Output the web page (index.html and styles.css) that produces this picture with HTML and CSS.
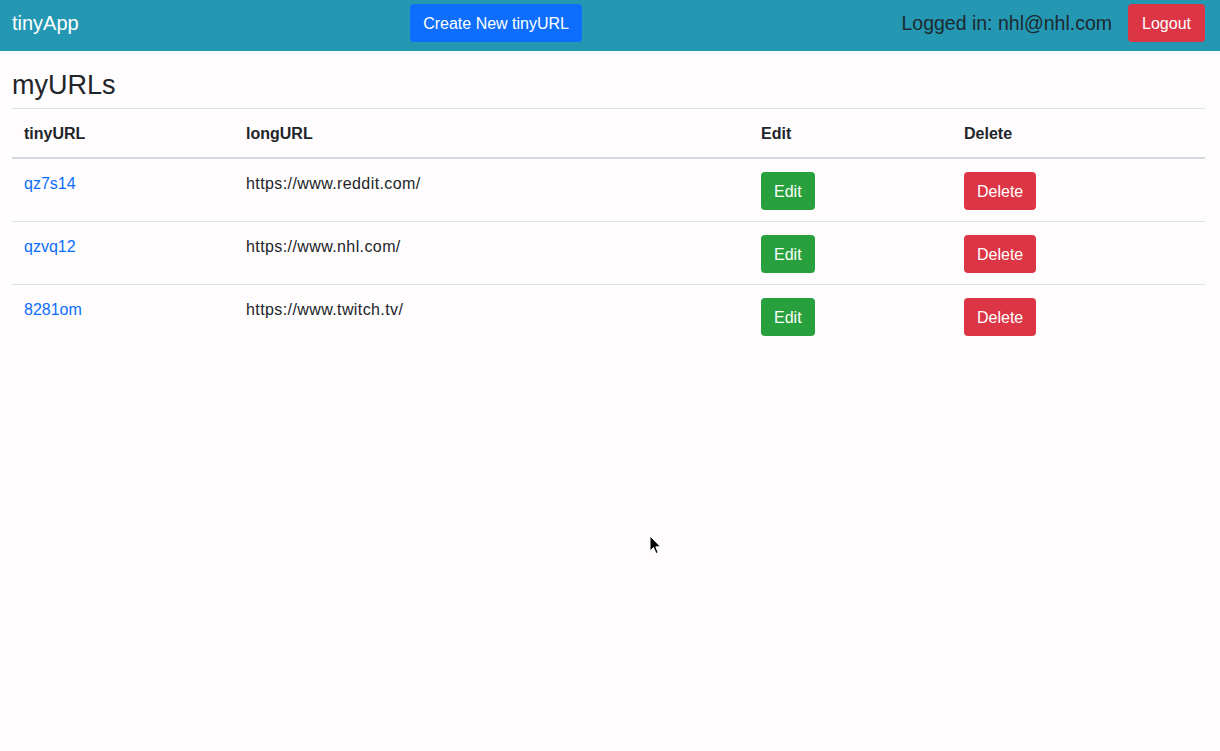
FILE: index.html
```html
<!DOCTYPE html>
<html lang="en">
<head>
<meta charset="utf-8">
<title>tinyApp</title>
<link rel="stylesheet" href="styles.css">
</head>
<body>
<nav class="navbar">
  <a class="brand" href="#">tinyApp</a>
  <a class="btn btn-primary btn-create" href="#">Create New tinyURL</a>
  <div class="user">
    <span class="logged">Logged in: nhl@nhl.com</span>
    <a class="btn btn-danger btn-logout" href="#">Logout</a>
  </div>
</nav>
<main class="container">
  <h3 class="title">myURLs</h3>
  <table class="table">
    <colgroup>
      <col class="c1"><col class="c2"><col class="c3"><col class="c4">
    </colgroup>
    <thead>
      <tr><th>tinyURL</th><th>longURL</th><th>Edit</th><th>Delete</th></tr>
    </thead>
    <tbody>
      <tr>
        <td><a class="link" href="#">qz7s14</a></td>
        <td class="url">https://www.reddit.com/</td>
        <td><a class="btn btn-success" href="#">Edit</a></td>
        <td><a class="btn btn-danger" href="#">Delete</a></td>
      </tr>
      <tr>
        <td><a class="link" href="#">qzvq12</a></td>
        <td class="url">https://www.nhl.com/</td>
        <td><a class="btn btn-success" href="#">Edit</a></td>
        <td><a class="btn btn-danger" href="#">Delete</a></td>
      </tr>
      <tr>
        <td><a class="link" href="#">8281om</a></td>
        <td class="url">https://www.twitch.tv/</td>
        <td><a class="btn btn-success" href="#">Edit</a></td>
        <td><a class="btn btn-danger" href="#">Delete</a></td>
      </tr>
    </tbody>
  </table>
</main>
<svg class="cursor" width="14" height="22" viewBox="0 0 14 22" aria-hidden="true">
  <path d="M1 1 L1 16 L4.5 12.5 L7 18.5 L9.2 17.6 L6.8 11.8 L11.5 11.8 Z" fill="#000" stroke="#fff" stroke-width="1"/>
</svg>
</body>
</html>
```

FILE: styles.css
```css
* { box-sizing: border-box; }
html, body {
  margin: 0;
  padding: 0;
  background: #fefcfd;
  font-family: "Liberation Sans", Arial, sans-serif;
  font-size: 16px;
  line-height: 1.5;
  color: #212529;
}
a { text-decoration: none; }

.navbar {
  display: flex;
  align-items: flex-start;
  justify-content: space-between;
  height: 51px;
  padding: 4px 15px 0 12px;
  background: #2497b3;
}
.brand {
  color: #fff;
  font-size: 20px;
  line-height: 38px;
}
.btn-create { margin-left: 12px; }
.user {
  display: flex;
  align-items: center;
  gap: 16px;
}
.logged {
  font-size: 19.5px;
  line-height: 38px;
  color: #1d2a2f;
}

.btn {
  display: inline-block;
  height: 38px;
  padding: 7px 12px 5px;
  border: 1px solid transparent;
  border-radius: 4px;
  color: #fff;
  font-size: 16px;
  line-height: 24px;
}
.btn-logout { padding-left: 13px; padding-right: 13px; }
.btn-primary { background: #0d6efd; }
.btn-danger { background: #dc3545; }
.btn-success { background: #28a03e; }

.container {
  padding: 0 15px 0 12px;
}
.title {
  margin: 0;
  padding-top: 16px;
  height: 57px;
  font-size: 27px;
  font-weight: 400;
  line-height: 36px;
}
.table {
  width: 100%;
  border-collapse: collapse;
  table-layout: fixed;
}
.c1 { width: 222px; }
.c2 { width: 515px; }
.c3 { width: 203px; }
.table th, .table td {
  padding: 13px 12px 11px;
  text-align: left;
  vertical-align: top;
  border-top: 1px solid #dee2e6;
}
.table td.url { letter-spacing: 0.4px; }
.table th {
  font-weight: 700;
  border-bottom: 2px solid #d5d8de;
}
.link { color: #0d6efd; }

.cursor {
  position: absolute;
  left: 649px;
  top: 535px;
}
```
